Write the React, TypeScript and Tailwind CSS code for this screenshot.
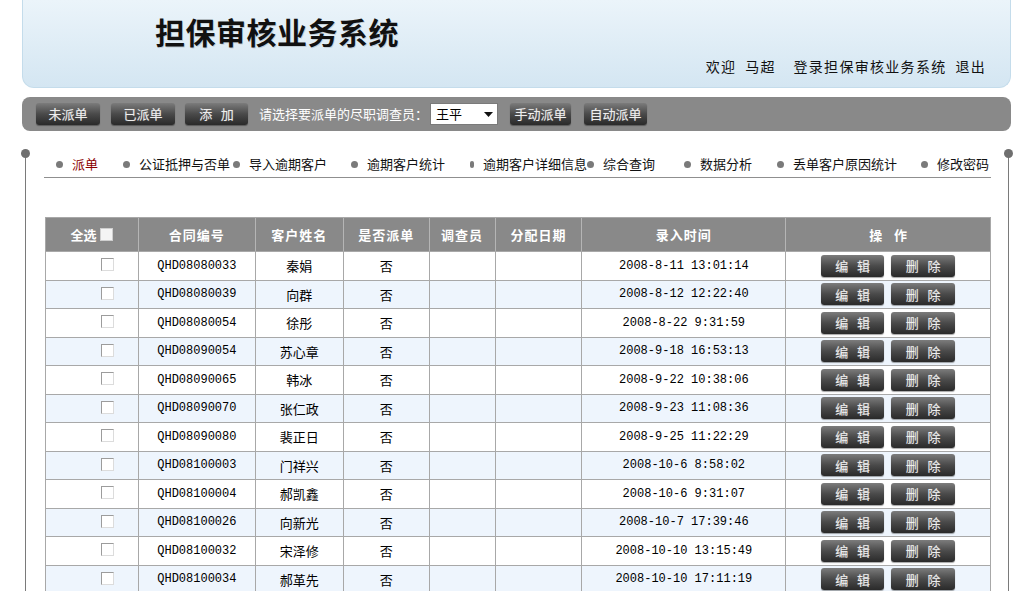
import React from "react";

const rows = [
  { code: "QHD08080033", name: "秦娟", time: "2008-8-11 13:01:14" },
  { code: "QHD08080039", name: "向群", time: "2008-8-12 12:22:40" },
  { code: "QHD08080054", name: "徐彤", time: "2008-8-22 9:31:59" },
  { code: "QHD08090054", name: "苏心章", time: "2008-9-18 16:53:13" },
  { code: "QHD08090065", name: "韩冰", time: "2008-9-22 10:38:06" },
  { code: "QHD08090070", name: "张仁政", time: "2008-9-23 11:08:36" },
  { code: "QHD08090080", name: "裴正日", time: "2008-9-25 11:22:29" },
  { code: "QHD08100003", name: "门祥兴", time: "2008-10-6 8:58:02" },
  { code: "QHD08100004", name: "郝凯鑫", time: "2008-10-6 9:31:07" },
  { code: "QHD08100026", name: "向新光", time: "2008-10-7 17:39:46" },
  { code: "QHD08100032", name: "宋泽修", time: "2008-10-10 13:15:49" },
  { code: "QHD08100034", name: "郝革先", time: "2008-10-10 17:11:19" },
];

const navItems = [
  { label: "派单", w: "w-[67px]", active: true },
  { label: "公证抵押与否单", w: "w-[110px]" },
  { label: "导入逾期客户", w: "w-[118px]" },
  { label: "逾期客户统计", w: "w-[119px]" },
  { label: "逾期客户详细信息", w: "w-[117px]" },
  { label: "综合查询", w: "w-[97px]" },
  { label: "数据分析", w: "w-[93px]" },
  { label: "丢单客户原因统计", w: "w-[144px]" },
  { label: "修改密码", w: "w-[70px]" },
];

const cols = ["w-[93px]", "w-[117px]", "w-[88px]", "w-[86px]", "w-[66px]", "w-[87px]", "w-[204px]", "w-[205px]"];

function DarkButton({ children, className = "" }: { children: React.ReactNode; className?: string }) {
  return (
    <button
      className={`h-[22px] rounded-[3px] bg-gradient-to-b from-[#7c7c7c] via-[#4a4a4a] to-[#2a2a2a] text-[13px] text-[#eeeeee] shadow-[0_1px_1px_rgba(0,0,0,0.35)] [text-shadow:0_0_1px_rgba(255,255,255,0.4)] ${className}`}
    >
      {children}
    </button>
  );
}

function Box() {
  return <span className="inline-block h-[13px] w-[13px] border border-[#9c9c9c] border-r-[#dcdcdc] border-b-[#dcdcdc] bg-white" />;
}

export default function App() {
  return (
    <div className="min-h-[591px] w-[1021px] overflow-hidden bg-white font-['Noto_Sans_CJK_SC',sans-serif] text-[13px] text-black">
      {/* header */}
      <div className="ml-[22px] mr-[10px] flex h-[88px] flex-col rounded-b-[12px] border border-t-0 border-[#c4dceb] bg-gradient-to-b from-[#ebf4fa] to-[#d4e6f2] pl-[132px] pr-[24px] pt-[12px]">
        <div className="text-[30px] font-bold leading-[38px] tracking-[0.5px] text-[#111] [text-shadow:1px_1px_0_rgba(0,0,0,0.12)]">
          担保审核业务系统
        </div>
        <div className="mt-auto self-end pb-[12px] text-[14px] leading-[18px] tracking-[1.3px] text-[#111]">
          欢迎&nbsp;&nbsp;马超&nbsp;&nbsp;&nbsp;&nbsp;登录担保审核业务系统&nbsp;&nbsp;退出
        </div>
      </div>

      {/* toolbar */}
      <div className="ml-[22px] mr-[10px] mt-[9px] flex h-[34px] items-center rounded-[8px] bg-[#898989] pl-[14px]">
        <DarkButton className="w-[64px]">未派单</DarkButton>
        <DarkButton className="ml-[11px] w-[64px]">已派单</DarkButton>
        <DarkButton className="ml-[10px] w-[63px]">添&nbsp;&nbsp;&nbsp;加</DarkButton>
        <span className="ml-[11px] text-[13px] text-white">请选择要派单的尽职调查员：</span>
        <div className="ml-[2px] flex h-[22px] w-[68px] items-center justify-between border border-[#7a7a7a] bg-white pl-[5px] pr-[4px]">
          <span className="text-[13px]">王平</span>
          <svg width="9" height="5" viewBox="0 0 9 5"><path d="M0 0h9L4.5 5z" fill="#111" /></svg>
        </div>
        <DarkButton className="ml-[12px] w-[61px]">手动派单</DarkButton>
        <DarkButton className="ml-[13px] w-[63px]">自动派单</DarkButton>
      </div>

      {/* content frame */}
      <div className="relative ml-[25px] mr-[12px] mt-[12px] min-h-[450px] border-l border-r border-[#7a7a7a]">
        <span className="absolute -left-[5px] -top-[4px] h-[9px] w-[9px] rounded-full bg-[#6f6f6f]" />
        <span className="absolute -right-[5px] -top-[4px] h-[9px] w-[9px] rounded-full bg-[#6f6f6f]" />

        <div className="ml-[18px] mr-[17px] mt-[22px] box-content flex h-[22px] items-center border-b border-[#8f8f8f] pb-[2px] pl-[12px]">
          {navItems.map((n) => (
            <div key={n.label} className={`flex shrink-0 items-center ${n.w}`}>
              <span className="h-[7px] w-[7px] rounded-full bg-[#7a7a7a]" />
              <span className={`ml-[9px] whitespace-nowrap text-[13px] ${n.active ? "text-[#8b0000]" : "text-[#111]"}`}>{n.label}</span>
            </div>
          ))}
        </div>

        {/* table */}
        <div className="ml-[19px] mt-[39px] w-[946px] border-l border-t border-[#a8a8a8]">
          <div className="flex h-[33px] bg-[#898989] text-[13px] font-bold text-white">
            <div className={`${cols[0]} flex items-center justify-center gap-[4px] border-r border-[#b5b5b5]`}>
              全选 <span className="inline-block h-[13px] w-[13px] border border-[#cfcfcf] bg-[#f4f4f4]" />
            </div>
            {["合同编号", "客户姓名", "是否派单", "调查员", "分配日期", "录入时间"].map((h, i) => (
              <div key={h} className={`${cols[i + 1]} flex items-center justify-center border-r border-[#b5b5b5] tracking-[1px]`}>
                {h}
              </div>
            ))}
            <div className={`${cols[7]} flex items-center justify-center border-r border-[#a8a8a8]`}>操&nbsp;&nbsp;&nbsp;&nbsp;作</div>
          </div>
          {rows.map((r, i) => (
            <div key={r.code} className={`flex h-[28.5px] border-t border-[#a8a8a8] ${i % 2 ? "bg-[#eef5fd]" : "bg-white"}`}>
              <div className={`${cols[0]} flex justify-end border-r border-[#a8a8a8] pr-[24px] pt-[6px]`}>
                <Box />
              </div>
              <div className={`${cols[1]} flex items-center justify-center border-r border-[#a8a8a8] font-['Liberation_Mono',monospace] text-[12px]`}>{r.code}</div>
              <div className={`${cols[2]} flex items-center justify-center border-r border-[#a8a8a8] text-[13px]`}>{r.name}</div>
              <div className={`${cols[3]} flex items-center justify-center border-r border-[#a8a8a8] text-[13px]`}>否</div>
              <div className={`${cols[4]} border-r border-[#a8a8a8]`} />
              <div className={`${cols[5]} border-r border-[#a8a8a8]`} />
              <div className={`${cols[6]} flex items-center justify-center border-r border-[#a8a8a8] font-['Liberation_Mono',monospace] text-[12px]`}>{r.time}</div>
              <div className={`${cols[7]} flex items-center justify-center gap-[7px] border-r border-[#a8a8a8]`}>
                <DarkButton className="w-[63px] text-[#d8d8d8]">编&nbsp;&nbsp;&nbsp;辑</DarkButton>
                <DarkButton className="w-[64px] text-[#d8d8d8]">删&nbsp;&nbsp;&nbsp;除</DarkButton>
              </div>
            </div>
          ))}
        </div>
      </div>
    </div>
  );
}
